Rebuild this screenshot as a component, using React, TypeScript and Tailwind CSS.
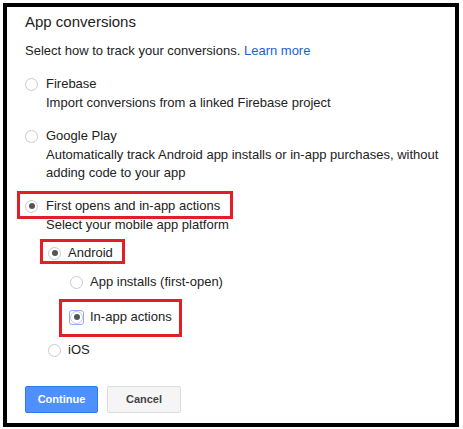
import React from "react";

const RED = "border-[#e41e26]";

function Radio({ checked, focused }: { checked?: boolean; focused?: boolean }) {
  const circle = (
    <span className="w-[13px] h-[13px] rounded-full border border-[#cbcbcb] bg-white flex items-center justify-center shrink-0">
      {checked && <span className="w-[6px] h-[6px] rounded-full bg-[#555]" />}
    </span>
  );
  if (focused) {
    return (
      <span className="w-[15px] h-[15px] -m-[1px] rounded-[3px] border border-[#8fb0ef] flex items-center justify-center shrink-0">
        {circle}
      </span>
    );
  }
  return circle;
}

function Option({
  label,
  checked,
  focused,
  box,
  nested,
}: {
  label: string;
  checked?: boolean;
  focused?: boolean;
  box?: string;
  nested?: boolean;
}) {
  return (
    <div className="flex">
      <div
        className={`relative inline-flex items-center h-[16px] ${nested ? "gap-[7px]" : "gap-[8px]"}`}
      >
        <Radio checked={checked} focused={focused} />
        <span className="leading-[16px]">{label}</span>
        {box && (
          <span className={`absolute border-[3px] ${RED} pointer-events-none ${box}`} />
        )}
      </div>
    </div>
  );
}

export default function App() {
  return (
    <div className="w-[463px] h-[429px] bg-white p-[3px] font-['Liberation_Sans',Arial,sans-serif] text-[13px] text-[#222]">
      <div className="w-[456px] h-[424px] border-4 border-black pl-[18px] pt-[6px]">
        <h1 className="text-[15px] leading-[17px] text-[#222]">App conversions</h1>
        <p className="mt-[13px] leading-[16px]">
          Select how to track your conversions.{" "}
          <a className="text-[#1a5fd3]">Learn more</a>
        </p>

        <div className="mt-[17px]">
          <Option label="Firebase" />
          <p className="mt-[2px] pl-[21px] leading-[18px]">
            Import conversions from a linked Firebase project
          </p>
        </div>

        <div className="mt-[16px]">
          <Option label="Google Play" />
          <p className="mt-[2px] pl-[21px] leading-[18px] pr-[8px]">
            Automatically track Android app installs or in-app purchases, without adding code to your app
          </p>
        </div>

        <div className="mt-[16px]">
          <Option
            label="First opens and in-app actions"
            checked
            box="-left-[8px] -top-[7px] -bottom-[5px] -right-[13px]"
          />
          <p className="mt-[2px] pl-[21px] leading-[18px]">Select your mobile app platform</p>

          <div className="pl-[23px] mt-[11px]">
            <Option
              label="Android"
              checked
              nested
              box="-left-[8px] -top-[6px] -bottom-[3px] -right-[12px]"
            />
            <div className="pl-[22px] mt-[13px]">
              <Option label="App installs (first-open)" nested />
              <div className="mt-[19px]">
                <Option
                  label="In-app actions"
                  checked
                  focused
                  nested
                  box="-left-[11px] -top-[10px] -bottom-[12px] -right-[10px]"
                />
              </div>
            </div>
            <div className="mt-[17px]">
              <Option label="iOS" nested />
            </div>
          </div>
        </div>

        <div className="mt-[28px] flex gap-[9px]">
          <button className="w-[73px] h-[27px] rounded-[2px] border border-[#3079ed] bg-[#4d90fe] text-white text-[11px] font-bold">
            Continue
          </button>
          <button className="w-[74px] h-[27px] rounded-[2px] border border-[#dcdcdc] bg-[#f5f5f5] text-[#444] text-[11px] font-bold">
            Cancel
          </button>
        </div>
      </div>
    </div>
  );
}
